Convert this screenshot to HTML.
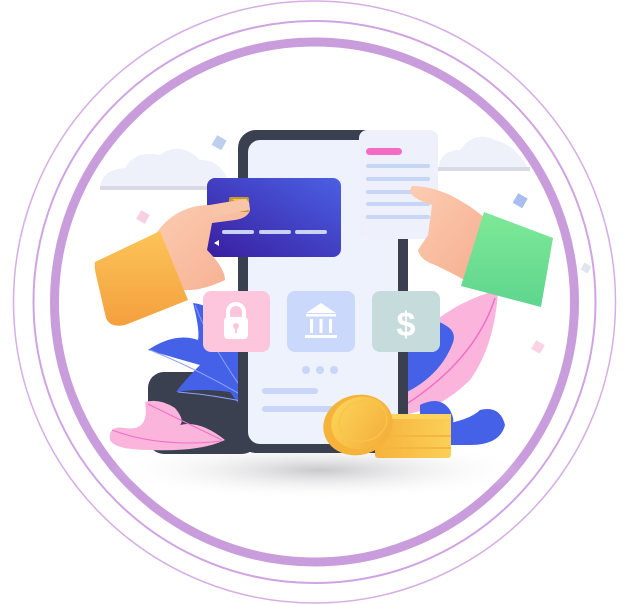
<!DOCTYPE html>
<html><head><meta charset="utf-8"><style>html,body{margin:0;padding:0;background:#fff;width:640px;height:604px;overflow:hidden}</style></head>
<body>
<svg width="640" height="604" viewBox="0 0 640 604" xmlns="http://www.w3.org/2000/svg">
<defs>
<linearGradient id="card" x1="0" y1="1" x2="1" y2="0"><stop offset="0" stop-color="#3a1ea0"/><stop offset="1" stop-color="#4a60e4"/></linearGradient>
<linearGradient id="orng" x1="0" y1="0" x2="0" y2="1"><stop offset="0" stop-color="#fcc458"/><stop offset="1" stop-color="#f4a03e"/></linearGradient>
<linearGradient id="grn" x1="0" y1="0" x2="0" y2="1"><stop offset="0" stop-color="#7ee997"/><stop offset="1" stop-color="#5fd58e"/></linearGradient>
<linearGradient id="skin" x1="0" y1="0" x2="1" y2="1"><stop offset="0" stop-color="#fccdb2"/><stop offset="1" stop-color="#f6ae90"/></linearGradient>
<linearGradient id="coin" x1="0" y1="0" x2="1" y2="1"><stop offset="0" stop-color="#fcd75c"/><stop offset="1" stop-color="#f4aa38"/></linearGradient>
<linearGradient id="stack" x1="0" y1="0" x2="1" y2="0"><stop offset="0" stop-color="#f6b23c"/><stop offset="1" stop-color="#fbd058"/></linearGradient>
<radialGradient id="shd" cx="0.5" cy="0.5" r="0.5"><stop offset="0" stop-color="#c8c8cc"/><stop offset="1" stop-color="#ffffff" stop-opacity="0"/></radialGradient>
</defs>
<circle cx="314.5" cy="302" r="301" fill="none" stroke="#d6aee6" stroke-width="1.5"/>
<circle cx="314.5" cy="302" r="281" fill="none" stroke="#d0a4e2" stroke-width="2"/>
<circle cx="314.5" cy="302" r="260" fill="none" stroke="#c99ddc" stroke-width="9"/>
<ellipse cx="320" cy="470" rx="210" ry="30" fill="url(#shd)"/>
<!-- clouds -->
<path d="M100 190 Q100 170 125 168 Q135 150 160 155 Q180 140 200 160 Q225 160 230 190 Z" fill="#eef0fa"/>
<rect x="100" y="186" width="135" height="4" fill="#d8dbe6"/>
<path d="M438 170 Q440 150 460 150 Q475 130 495 140 Q515 145 528 168 Z" fill="#eef0fa"/>
<rect x="438" y="167" width="92" height="4" fill="#d8dbe6"/>
<!-- cubes -->
<rect x="214" y="137" width="11" height="11" fill="#bcd0ee" transform="rotate(30 219 142)"/>
<rect x="138" y="212" width="10" height="10" fill="#f8d0e2" transform="rotate(30 143 217)"/>
<rect x="515" y="195" width="11" height="11" fill="#a9bdf2" transform="rotate(30 520 200)"/>
<rect x="582" y="264" width="8" height="8" fill="#dfe6ee" transform="rotate(30 586 268)"/>
<rect x="533" y="342" width="10" height="10" fill="#fad3e4" transform="rotate(30 538 347)"/>
<!-- back dark piece -->
<rect x="148" y="372" width="110" height="82" rx="16" fill="#3a4050"/>
<!-- right pink leaf -->
<path d="M498 290 Q460 300 430 325 Q405 350 402 415 Q440 410 470 380 Q495 345 498 290 Z" fill="#fbb4dc"/>
<path d="M495 298 Q475 360 405 405" stroke="#f070c8" stroke-width="1.5" fill="none"/>
<!-- right blue leaves -->
<path d="M407 330 Q430 315 445 325 Q458 332 452 345 Q440 375 407 392 Z" fill="#4561e8"/>
<path d="M420 405 Q440 395 450 410 Q460 430 440 425 Q470 420 480 410 Q500 405 505 425 Q500 445 470 445 L420 445 Z" fill="#4561e8"/>
<!-- left blue leaf -->
<path d="M193 303 Q200 330 198 340 Q175 332 148 350 Q175 358 200 365 Q185 380 176 392 Q200 388 230 392 L250 420 L248 315 Q230 320 225 330 Q215 305 193 303 Z" fill="#4561e8"/>
<path d="M195 305 Q210 345 250 400 M150 350 Q200 370 250 400 M178 392 Q215 395 250 403" stroke="#8fa3f5" stroke-width="1" fill="none"/>
<!-- phone -->
<rect x="238" y="130" width="170" height="323" rx="18" fill="#3a4050"/>
<rect x="248" y="140" width="150" height="304" rx="12" fill="#eef2fd"/>
<circle cx="306" cy="370" r="4" fill="#c9d6f8"/><circle cx="320" cy="370" r="4" fill="#c9d6f8"/><circle cx="334" cy="370" r="4" fill="#c9d6f8"/>
<rect x="262" y="388" width="56" height="6" rx="3" fill="#c9d6f8"/>
<rect x="262" y="406" width="80" height="6" rx="3" fill="#c9d6f8"/>
<!-- pink leaf lower left -->
<path d="M145 402 Q160 398 175 408 Q185 420 180 425 Q200 420 225 440 Q200 452 150 450 Q115 450 110 440 Q108 425 125 428 Q150 432 145 402 Z" fill="#fbb4dc"/>
<path d="M148 404 Q170 415 222 440 M112 430 Q160 448 222 441" stroke="#f070c8" stroke-width="1" fill="none"/>
<!-- icon tiles -->
<rect x="203" y="291" width="67" height="61" rx="8" fill="#fdc6dc"/>
<path d="M228 318 v-6 a8 8 0 0 1 16 0 v6" stroke="#fff" stroke-width="4" fill="none"/>
<rect x="224" y="317" width="24" height="22" rx="4" fill="#fff"/>
<circle cx="236" cy="326" r="3" fill="#fdc6dc"/><rect x="235" y="327" width="2" height="6" fill="#fdc6dc"/>
<rect x="287" y="291" width="68" height="61" rx="8" fill="#c9d8fb"/>
<path d="M306 313 L321 303 L336 313 Z" fill="#fff"/>
<rect x="306" y="314" width="30" height="2.5" fill="#fff"/>
<rect x="310" y="319" width="3" height="14" fill="#fff"/><rect x="319.5" y="319" width="3" height="14" fill="#fff"/><rect x="329" y="319" width="3" height="14" fill="#fff"/>
<rect x="305" y="335" width="32" height="3" fill="#fff"/>
<rect x="372" y="291" width="68" height="61" rx="8" fill="#c6dcdc"/>
<text x="406" y="336" font-family="Liberation Sans, sans-serif" font-size="34" font-weight="bold" fill="#fff" text-anchor="middle">$</text>
<!-- coins -->
<rect x="375" y="416" width="76" height="42" rx="3" fill="url(#stack)"/>
<rect x="375" y="414" width="76" height="5" fill="#fcd35c"/>
<rect x="375" y="435" width="76" height="2" fill="#f5b63e"/>
<rect x="375" y="447" width="76" height="2" fill="#f5b63e"/>
<ellipse cx="358" cy="425" rx="35" ry="30" fill="#f5b33a" transform="rotate(-15 358 425)"/>
<ellipse cx="361" cy="423" rx="30" ry="26" fill="url(#coin)" transform="rotate(-15 361 423)"/>
<ellipse cx="363" cy="421" rx="24" ry="20" fill="none" stroke="#f8c44a" stroke-width="1.5" transform="rotate(-15 363 421)"/>
<!-- document -->
<rect x="359" y="130" width="79" height="109" rx="8" fill="#eef1fb"/>
<rect x="366" y="148" width="36" height="7" rx="3.5" fill="#f46ac4"/>
<rect x="366" y="164" width="64" height="4" rx="2" fill="#c8d6f6"/>
<rect x="366" y="177" width="64" height="4" rx="2" fill="#c8d6f6"/>
<rect x="366" y="190" width="64" height="4" rx="2" fill="#c8d6f6"/>
<rect x="366" y="202" width="64" height="4" rx="2" fill="#c8d6f6"/>
<rect x="366" y="215" width="64" height="4" rx="2" fill="#c8d6f6"/>
<!-- right hand -->
<path d="M412 186 Q430 186 450 195 Q470 205 485 218 L470 283 Q450 272 435 265 Q420 260 418 250 L428 235 L432 205 Q410 198 410 190 Z" fill="url(#skin)"/>
<path d="M484 212 L553 238 L541 307 L461 286 Z" fill="url(#grn)"/>
<!-- card -->
<rect x="207" y="178" width="134" height="79" rx="8" fill="url(#card)"/>
<rect x="222" y="230" width="32" height="4" rx="2" fill="#c9d3f5"/>
<rect x="259" y="230" width="32" height="4" rx="2" fill="#c9d3f5"/>
<rect x="295" y="230" width="32" height="4" rx="2" fill="#c9d3f5"/>
<path d="M214 243 L219 240 L219 246 Z" fill="#fff"/>
<!-- left hand -->
<path d="M155 235 Q175 205 210 205 L240 200 Q250 200 250 210 Q248 218 235 220 L212 223 L207 250 Q225 268 225 280 Q200 292 180 290 Z" fill="url(#skin)"/>
<rect x="229" y="197" width="20" height="15" rx="2" fill="#c79a2a"/>
<path d="M232 199 L247 199 L247 210 Z" fill="#f3c64a"/>
<path d="M210 205 L245 199 Q251 201 249 210 L213 217 Z" fill="#f9c5a8"/>
<path d="M95 262 L160 231 L188 300 L125 325 Q110 328 106 318 L96 275 Q94 266 95 262 Z" fill="url(#orng)"/>
</svg>
</body></html>
